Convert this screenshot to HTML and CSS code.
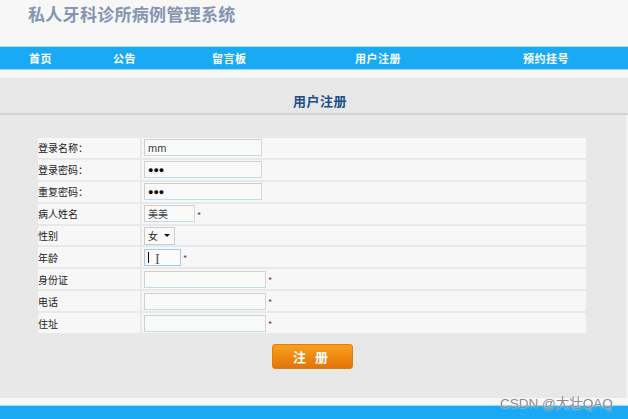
FILE: index.html
```html
<!DOCTYPE html>
<html lang="zh">
<head>
<meta charset="utf-8">
<title>私人牙科诊所病例管理系统</title>
<link rel="stylesheet" href="styles.css">
</head>
<body>
<div class="page">
  <header class="top">
    <h1 class="site-title">私人牙科诊所病例管理系统</h1>
  </header>
  <nav class="nav">
    <a>首页</a>
    <a>公告</a>
    <a>留言板</a>
    <a>用户注册</a>
    <a>预约挂号</a>
  </nav>
  <div class="strip"></div>
  <div class="title-bar"><h2>用户注册</h2></div>
  <main class="main">
    <div class="form">
      <div class="row"><div class="lbl">登录名称：</div><div class="val"><span class="inp w117">mm</span></div></div>
      <div class="row"><div class="lbl">登录密码：</div><div class="val"><span class="inp w117 pw">●●●</span></div></div>
      <div class="row"><div class="lbl">重复密码：</div><div class="val"><span class="inp w117 pw">●●●</span></div></div>
      <div class="row"><div class="lbl">病人姓名</div><div class="val"><span class="inp w50">美美</span><span class="star">*</span></div></div>
      <div class="row"><div class="lbl">性别</div><div class="val"><span class="sel">女<span class="caret"></span></span></div></div>
      <div class="row"><div class="lbl">年龄</div><div class="val"><span class="inp w36 focus"><span class="cur"></span><span class="ibeam">I</span></span><span class="star">*</span></div></div>
      <div class="row"><div class="lbl">身份证</div><div class="val"><span class="inp w121"></span><span class="star">*</span></div></div>
      <div class="row"><div class="lbl">电话</div><div class="val"><span class="inp w121"></span><span class="star">*</span></div></div>
      <div class="row"><div class="lbl">住址</div><div class="val"><span class="inp w121"></span><span class="star">*</span></div></div>
    </div>
    <div class="actions"><button class="btn">注 册</button></div>
  </main>
  <div class="strip2"></div>
  <footer class="foot"></footer>
  <div class="watermark">CSDN @大壮QAQ</div>
</div>
</body>
</html>
```
FILE: styles.css
```css
* { box-sizing: border-box; }
html, body { margin: 0; padding: 0; }
body {
  width: 628px;
  height: 419px;
  overflow: hidden;
  background: #f7f7f7;
  font-family: "Noto Sans CJK SC", "Liberation Sans", sans-serif;
  color: #333;
}
.page { position: relative; width: 628px; height: 419px; }
.top { height: 46px; background: #f7f7f7; padding: 4px 0 0 28px; }
.site-title {
  margin: 0;
  font-size: 17px;
  line-height: 20px;
  font-weight: bold;
  color: #8595b2;
  letter-spacing: 0.3px;
}
.nav {
  height: 24px;
  background: #19aaf3;
  border-top: 1px solid #a9dcf6;
  border-bottom: 1px solid #9fd8f4;
  display: grid;
  grid-template-columns: 84px 99px 143px 168px auto;
  padding-left: 29px;
  align-items: center;
}
.nav a {
  color: #fff;
  font-size: 11px;
  font-weight: bold;
  line-height: 14px;
  letter-spacing: 0.5px;
}
.strip { height: 8px; background: #f7f7f7; }
.title-bar {
  height: 37px;
  background: #e7e7e7;
  border-bottom: 2px solid #d3d3d3;
  display: flex;
  justify-content: center;
  padding: 15px 0 0 12px;
}
.title-bar h2 {
  margin: 0;
  font-size: 13px;
  line-height: 16px;
  font-weight: bold;
  color: #1b4f86;
  letter-spacing: 0.5px;
}
.main {
  height: 283px;
  background: #e8e8e8;
  padding: 23px 0 0 38px;
  border-right: 2px solid #f3f3f3;
}
.form {
  width: 548px;
  display: flex;
  flex-direction: column;
  gap: 2px;
}
.row {
  height: 19.9px;
  display: grid;
  grid-template-columns: 102px 1fr;
  gap: 2px;
}
.lbl, .val { background: #f7f7f7; display: flex; align-items: center; }
.lbl { font-size: 10px; color: #222; }
.val { padding-left: 2px; }
.inp {
  height: 17px;
  background: #f9f9f9;
  border: 1px solid #cfcfcf;
  border-bottom-color: #c3dcea;
  border-right-color: #d7d7d7;
  font-family: "Liberation Sans", "Noto Sans CJK SC", sans-serif;
  font-size: 11px;
  color: #444;
  padding: 0 3px;
  display: flex;
  align-items: center;
  position: relative;
}
.inp.pw { font-size: 9px; color: #000; letter-spacing: 0; }
.w117 { width: 118px; }
.w50 { width: 51px; font-family: "Noto Sans CJK SC", sans-serif; font-size: 10px; }
.w36 { width: 37px; }
.w121 { width: 122px; }
.focus { border-color: #a6c8e4; background: #fbfbfb; }
.cur { width: 1px; height: 11px; background: #000; }
.ibeam {
  font-family: "Liberation Serif", serif;
  font-size: 14px;
  color: #555;
  margin-left: 6px;
  margin-top: 6px;
}
.star { color: #7a2a5a; font-size: 9px; margin-left: 2px; margin-top: 3px; }
.sel {
  width: 31px;
  height: 18px;
  background: #fafafa;
  border: 1px solid #cdcdcd;
  font-size: 10px;
  color: #222;
  display: flex;
  align-items: center;
  padding-left: 3px;
  gap: 6px;
}
.caret {
  width: 0; height: 0;
  border-left: 3px solid transparent;
  border-right: 3px solid transparent;
  border-top: 3px solid #111;
}
.actions { width: 548px; display: flex; justify-content: center; padding-top: 11px; }
.btn {
  width: 81px;
  height: 25px;
  border: 1px solid #e07d10;
  border-radius: 3px;
  background: linear-gradient(#f9a01f, #e37406);
  color: #fff;
  font-family: "Noto Sans CJK SC", sans-serif;
  font-size: 13px;
  font-weight: bold;
  letter-spacing: 3px;
  padding: 0;
}
.strip2 { height: 7px; background: #f7f7f7; }
.foot { height: 14px; background: #19aaf3; border-top: 1px solid #9fd8f4; }
.watermark {
  position: absolute;
  left: 500px;
  top: 392px;
  font-family: "Liberation Sans", "Noto Sans CJK SC", sans-serif;
  font-size: 13.5px;
  color: #8a8a8a;
  text-shadow: 0 0 2px #fff;
}
```
